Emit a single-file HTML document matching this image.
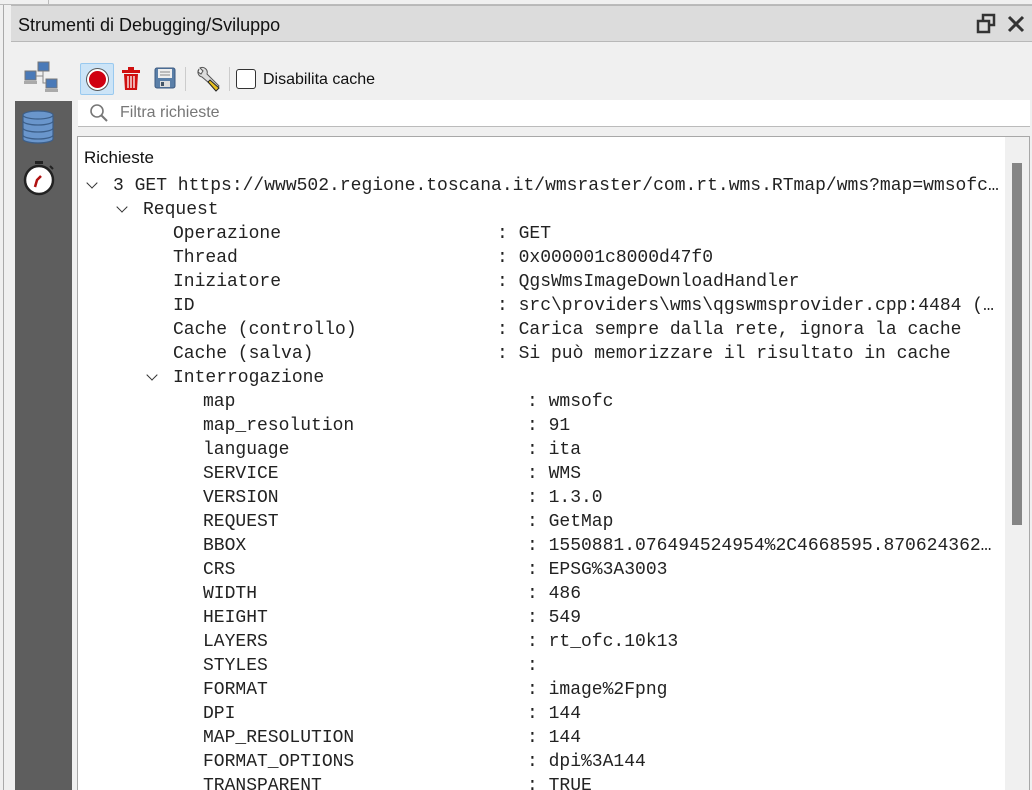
<!DOCTYPE html>
<html><head><meta charset="utf-8"><style>
*{margin:0;padding:0;box-sizing:border-box}
html,body{width:1032px;height:790px;overflow:hidden}
body{background:#f0f0f0;position:relative;font-family:"Liberation Sans",sans-serif}
.a{position:absolute}
.m{font-family:"Liberation Mono",monospace;font-size:18px;color:#222;white-space:pre;line-height:24px;height:24px}
.chev{position:absolute;width:8px;height:8px;border-right:1.3px solid #333;border-bottom:1.3px solid #333;transform:rotate(45deg)}
</style></head><body>
<div class="a" style="left:0;top:0;width:1032px;height:5px;background:#f0f0f0;border-bottom:1px solid #bbb"></div>
<div class="a" style="left:48px;top:0;width:1px;height:5px;background:#bbb"></div>
<div class="a" style="left:3px;top:5px;width:1px;height:785px;background:#aaa"></div>
<div class="a" style="left:11px;top:5px;width:1021px;height:37px;background:#dcdcdc;border-top:1px solid #b8b8b8;border-bottom:1px solid #b8b8b8"></div>
<div class="a" style="left:18px;top:15px;font-size:18px;color:#111">Strumenti di Debugging/Sviluppo</div>
<svg class="a" style="left:976px;top:12px" width="22" height="24" viewBox="0 0 22 24"><rect x="7" y="3" width="11" height="10" fill="none" stroke="#333" stroke-width="2.5"/><rect x="2" y="9" width="11" height="11" fill="#dcdcdc" stroke="#333" stroke-width="2.5"/></svg>
<svg class="a" style="left:1006px;top:14px" width="20" height="20"><path d="M3 3L17 17M17 3L3 17" stroke="#333" stroke-width="3"/></svg>
<svg class="a" style="left:24px;top:61px" width="36" height="32"><rect x="14" y="1" width="11" height="9" fill="#4a7ab8" stroke="#777"/><rect x="1" y="10" width="11" height="9" fill="#4a7ab8" stroke="#777"/><rect x="22" y="18" width="11" height="9" fill="#4a7ab8" stroke="#777"/><path d="M19 10V22H22M12 15H19" stroke="#888" fill="none"/><rect x="0" y="20" width="13" height="3" fill="#aaa"/><rect x="21" y="28" width="13" height="3" fill="#aaa"/></svg>
<div class="a" style="left:80px;top:63px;width:34px;height:32px;background:#cce4f7;border:1px solid #99c9ef;border-radius:2px"></div>
<div class="a" style="left:87px;top:69px;width:21px;height:21px;border-radius:50%;background:#d00010;border:2.5px solid #fff;box-shadow:0 0 0 1px #555"></div>
<svg class="a" style="left:121px;top:67px" width="20" height="24"><rect x="1" y="3" width="18" height="3" fill="#d01010"/><rect x="7" y="0" width="6" height="3" fill="#d01010"/><path d="M3 7H17L16 23H4Z" fill="#d01010"/><path d="M7 9V21M10 9V21M13 9V21" stroke="#fff" stroke-width="1.3"/></svg>
<svg class="a" style="left:154px;top:67px" width="22" height="22"><rect x="1" y="1" width="20" height="20" rx="2" fill="#5a7fa8" stroke="#3c5a80"/><rect x="4" y="2" width="14" height="9" fill="#eee"/><path d="M6 5H16M6 8H16" stroke="#888"/><rect x="6" y="14" width="10" height="6" fill="#ddd"/><rect x="7" y="15" width="3" height="4" fill="#456"/></svg>
<div class="a" style="left:185px;top:67px;width:1px;height:24px;background:#ccc"></div>
<svg class="a" style="left:195px;top:66px" width="28" height="26"><path d="M4 3a5 5 0 0 0 3 8l14 12 3-3L12 8a5 5 0 0 0-7-6l3 3-2 3-3-2z" fill="#ddd" stroke="#555"/><path d="M15 14l9 8-3 3-8-9z" fill="#e8c020" stroke="#222"/></svg>
<div class="a" style="left:229px;top:67px;width:1px;height:24px;background:#ccc"></div>
<div class="a" style="left:236px;top:69px;width:20px;height:20px;border:1.3px solid #333;border-radius:3px;background:#fff"></div>
<div class="a" style="left:263px;top:71px;font-size:16px;color:#111">Disabilita cache</div>
<div class="a" style="left:15px;top:101px;width:57px;height:689px;background:#5e5e5e"></div>
<svg class="a" style="left:21px;top:110px" width="34" height="34"><g fill="#6a96cc" stroke="#3c5f8a" stroke-width="1.2"><path d="M2 25v4c0 2 6 4 15 4s15-2 15-4v-4"/><path d="M2 18v7c0 2 6 4 15 4s15-2 15-4v-7"/><path d="M2 11v7c0 2 6 4 15 4s15-2 15-4v-7"/><path d="M2 5v6c0 2 6 4 15 4s15-2 15-4V5"/><ellipse cx="17" cy="5" rx="15" ry="4"/></g></svg>
<svg class="a" style="left:22px;top:160px" width="34" height="36"><rect x="13" y="1" width="8" height="3" fill="#222"/><path d="M28 6l3 3" stroke="#222" stroke-width="2"/><circle cx="17" cy="20" r="14" fill="#fff" stroke="#222" stroke-width="2.5"/><path d="M13 27l2-7 4-4" stroke="#b01010" stroke-width="2.5" fill="none"/></svg>
<div class="a" style="left:78px;top:100px;width:952px;height:27px;background:#fff;border-bottom:1px solid #bbb"></div>
<svg class="a" style="left:89px;top:103px" width="20" height="20"><circle cx="8" cy="8" r="6" fill="none" stroke="#777" stroke-width="1.6"/><path d="M12.5 12.5L18 18" stroke="#777" stroke-width="2"/></svg>
<div class="a" style="left:120px;top:104px;font-size:16px;color:#777">Filtra richieste</div>
<div class="a" style="left:77px;top:136px;width:953px;height:654px;background:#fff;border:1px solid #a8a8a8;border-bottom:none"></div>
<div class="a" style="left:1005px;top:137px;width:24px;height:653px;background:#f0f0f0"></div>
<div class="a" style="left:1012px;top:163px;width:10px;height:362px;background:#858585"></div>
<div class="a" style="left:84px;top:148px;font-size:17px;color:#111">Richieste</div>
<div class="chev" style="left:88px;top:179px"></div>
<div class="a m" style="left:113px;top:174px">3 GET https://www502.regione.toscana.it/wmsraster/com.rt.wms.RTmap/wms?map=wmsofc…</div>
<div class="chev" style="left:118px;top:203px"></div>
<div class="a m" style="left:143px;top:198px">Request</div>
<div class="a m" style="left:173px;top:222px">Operazione</div><div class="a m" style="left:497px;top:222px">: GET</div>
<div class="a m" style="left:173px;top:246px">Thread</div><div class="a m" style="left:497px;top:246px">: 0x000001c8000d47f0</div>
<div class="a m" style="left:173px;top:270px">Iniziatore</div><div class="a m" style="left:497px;top:270px">: QgsWmsImageDownloadHandler</div>
<div class="a m" style="left:173px;top:294px">ID</div><div class="a m" style="left:497px;top:294px">: src\providers\wms\qgswmsprovider.cpp:4484 (…</div>
<div class="a m" style="left:173px;top:318px">Cache (controllo)</div><div class="a m" style="left:497px;top:318px">: Carica sempre dalla rete, ignora la cache</div>
<div class="a m" style="left:173px;top:342px">Cache (salva)</div><div class="a m" style="left:497px;top:342px">: Si può memorizzare il risultato in cache</div>
<div class="chev" style="left:148px;top:371px"></div>
<div class="a m" style="left:173px;top:366px">Interrogazione</div>
<div class="a m" style="left:203px;top:390px">map</div><div class="a m" style="left:527px;top:390px">: wmsofc</div>
<div class="a m" style="left:203px;top:414px">map_resolution</div><div class="a m" style="left:527px;top:414px">: 91</div>
<div class="a m" style="left:203px;top:438px">language</div><div class="a m" style="left:527px;top:438px">: ita</div>
<div class="a m" style="left:203px;top:462px">SERVICE</div><div class="a m" style="left:527px;top:462px">: WMS</div>
<div class="a m" style="left:203px;top:486px">VERSION</div><div class="a m" style="left:527px;top:486px">: 1.3.0</div>
<div class="a m" style="left:203px;top:510px">REQUEST</div><div class="a m" style="left:527px;top:510px">: GetMap</div>
<div class="a m" style="left:203px;top:534px">BBOX</div><div class="a m" style="left:527px;top:534px">: 1550881.076494524954%2C4668595.870624362…</div>
<div class="a m" style="left:203px;top:558px">CRS</div><div class="a m" style="left:527px;top:558px">: EPSG%3A3003</div>
<div class="a m" style="left:203px;top:582px">WIDTH</div><div class="a m" style="left:527px;top:582px">: 486</div>
<div class="a m" style="left:203px;top:606px">HEIGHT</div><div class="a m" style="left:527px;top:606px">: 549</div>
<div class="a m" style="left:203px;top:630px">LAYERS</div><div class="a m" style="left:527px;top:630px">: rt_ofc.10k13</div>
<div class="a m" style="left:203px;top:654px">STYLES</div><div class="a m" style="left:527px;top:654px">:</div>
<div class="a m" style="left:203px;top:678px">FORMAT</div><div class="a m" style="left:527px;top:678px">: image%2Fpng</div>
<div class="a m" style="left:203px;top:702px">DPI</div><div class="a m" style="left:527px;top:702px">: 144</div>
<div class="a m" style="left:203px;top:726px">MAP_RESOLUTION</div><div class="a m" style="left:527px;top:726px">: 144</div>
<div class="a m" style="left:203px;top:750px">FORMAT_OPTIONS</div><div class="a m" style="left:527px;top:750px">: dpi%3A144</div>
<div class="a m" style="left:203px;top:774px">TRANSPARENT</div><div class="a m" style="left:527px;top:774px">: TRUE</div>
</body></html>
